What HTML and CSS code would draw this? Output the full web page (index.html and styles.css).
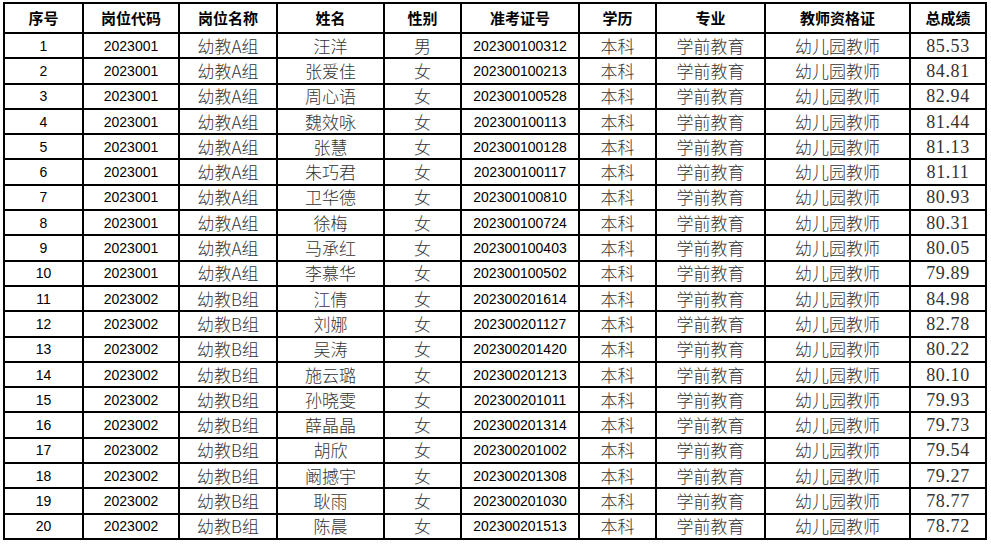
FILE: index.html
```html
<!DOCTYPE html>
<html lang="zh-CN">
<head>
<meta charset="utf-8">
<title>成绩表</title>
<link rel="stylesheet" href="styles.css">
</head>
<body>
<div class="page">
<table class="grid">
<colgroup>
<col class="c1"><col class="c2"><col class="c3"><col class="c4"><col class="c5"><col class="c6"><col class="c7"><col class="c8"><col class="c9"><col class="c10">
</colgroup>
<thead>
<tr class="head"><th>序号</th><th>岗位代码</th><th>岗位名称</th><th>姓名</th><th>性别</th><th>准考证号</th><th>学历</th><th>专业</th><th>教师资格证</th><th>总成绩</th></tr>
</thead>
<tbody>
<tr><td class="n">1</td><td class="n">2023001</td><td class="s">幼教A组</td><td class="s">汪洋</td><td class="s">男</td><td class="n">202300100312</td><td class="s">本科</td><td class="s">学前教育</td><td class="s">幼儿园教师</td><td class="m">85.53</td></tr>
<tr><td class="n">2</td><td class="n">2023001</td><td class="s">幼教A组</td><td class="s">张爱佳</td><td class="s">女</td><td class="n">202300100213</td><td class="s">本科</td><td class="s">学前教育</td><td class="s">幼儿园教师</td><td class="m">84.81</td></tr>
<tr><td class="n">3</td><td class="n">2023001</td><td class="s">幼教A组</td><td class="s">周心语</td><td class="s">女</td><td class="n">202300100528</td><td class="s">本科</td><td class="s">学前教育</td><td class="s">幼儿园教师</td><td class="m">82.94</td></tr>
<tr><td class="n">4</td><td class="n">2023001</td><td class="s">幼教A组</td><td class="s">魏效咏</td><td class="s">女</td><td class="n">202300100113</td><td class="s">本科</td><td class="s">学前教育</td><td class="s">幼儿园教师</td><td class="m">81.44</td></tr>
<tr><td class="n">5</td><td class="n">2023001</td><td class="s">幼教A组</td><td class="s">张慧</td><td class="s">女</td><td class="n">202300100128</td><td class="s">本科</td><td class="s">学前教育</td><td class="s">幼儿园教师</td><td class="m">81.13</td></tr>
<tr><td class="n">6</td><td class="n">2023001</td><td class="s">幼教A组</td><td class="s">朱巧君</td><td class="s">女</td><td class="n">202300100117</td><td class="s">本科</td><td class="s">学前教育</td><td class="s">幼儿园教师</td><td class="m">81.11</td></tr>
<tr><td class="n">7</td><td class="n">2023001</td><td class="s">幼教A组</td><td class="s">卫华德</td><td class="s">女</td><td class="n">202300100810</td><td class="s">本科</td><td class="s">学前教育</td><td class="s">幼儿园教师</td><td class="m">80.93</td></tr>
<tr><td class="n">8</td><td class="n">2023001</td><td class="s">幼教A组</td><td class="s">徐梅</td><td class="s">女</td><td class="n">202300100724</td><td class="s">本科</td><td class="s">学前教育</td><td class="s">幼儿园教师</td><td class="m">80.31</td></tr>
<tr><td class="n">9</td><td class="n">2023001</td><td class="s">幼教A组</td><td class="s">马承红</td><td class="s">女</td><td class="n">202300100403</td><td class="s">本科</td><td class="s">学前教育</td><td class="s">幼儿园教师</td><td class="m">80.05</td></tr>
<tr><td class="n">10</td><td class="n">2023001</td><td class="s">幼教A组</td><td class="s">李慕华</td><td class="s">女</td><td class="n">202300100502</td><td class="s">本科</td><td class="s">学前教育</td><td class="s">幼儿园教师</td><td class="m">79.89</td></tr>
<tr><td class="n">11</td><td class="n">2023002</td><td class="s">幼教B组</td><td class="s">江倩</td><td class="s">女</td><td class="n">202300201614</td><td class="s">本科</td><td class="s">学前教育</td><td class="s">幼儿园教师</td><td class="m">84.98</td></tr>
<tr><td class="n">12</td><td class="n">2023002</td><td class="s">幼教B组</td><td class="s">刘娜</td><td class="s">女</td><td class="n">202300201127</td><td class="s">本科</td><td class="s">学前教育</td><td class="s">幼儿园教师</td><td class="m">82.78</td></tr>
<tr><td class="n">13</td><td class="n">2023002</td><td class="s">幼教B组</td><td class="s">吴涛</td><td class="s">女</td><td class="n">202300201420</td><td class="s">本科</td><td class="s">学前教育</td><td class="s">幼儿园教师</td><td class="m">80.22</td></tr>
<tr><td class="n">14</td><td class="n">2023002</td><td class="s">幼教B组</td><td class="s">施云璐</td><td class="s">女</td><td class="n">202300201213</td><td class="s">本科</td><td class="s">学前教育</td><td class="s">幼儿园教师</td><td class="m">80.10</td></tr>
<tr><td class="n">15</td><td class="n">2023002</td><td class="s">幼教B组</td><td class="s">孙晓雯</td><td class="s">女</td><td class="n">202300201011</td><td class="s">本科</td><td class="s">学前教育</td><td class="s">幼儿园教师</td><td class="m">79.93</td></tr>
<tr><td class="n">16</td><td class="n">2023002</td><td class="s">幼教B组</td><td class="s">薛晶晶</td><td class="s">女</td><td class="n">202300201314</td><td class="s">本科</td><td class="s">学前教育</td><td class="s">幼儿园教师</td><td class="m">79.73</td></tr>
<tr><td class="n">17</td><td class="n">2023002</td><td class="s">幼教B组</td><td class="s">胡欣</td><td class="s">女</td><td class="n">202300201002</td><td class="s">本科</td><td class="s">学前教育</td><td class="s">幼儿园教师</td><td class="m">79.54</td></tr>
<tr><td class="n">18</td><td class="n">2023002</td><td class="s">幼教B组</td><td class="s">阚撼宇</td><td class="s">女</td><td class="n">202300201308</td><td class="s">本科</td><td class="s">学前教育</td><td class="s">幼儿园教师</td><td class="m">79.27</td></tr>
<tr><td class="n">19</td><td class="n">2023002</td><td class="s">幼教B组</td><td class="s">耿雨</td><td class="s">女</td><td class="n">202300201030</td><td class="s">本科</td><td class="s">学前教育</td><td class="s">幼儿园教师</td><td class="m">78.77</td></tr>
<tr><td class="n">20</td><td class="n">2023002</td><td class="s">幼教B组</td><td class="s">陈晨</td><td class="s">女</td><td class="n">202300201513</td><td class="s">本科</td><td class="s">学前教育</td><td class="s">幼儿园教师</td><td class="m">78.72</td></tr>
</tbody>
</table>
</div>
</body>
</html>
```
FILE: styles.css
```css
html, body {
  margin: 0;
  padding: 0;
  background: #fff;
}
.page {
  padding: 2px 0 0 3px;
}
.grid {
  border-collapse: collapse;
  table-layout: fixed;
  width: 982px;
  font-family: "Liberation Sans", Arial, "Noto Sans CJK SC", sans-serif;
  color: #000;
}
.c1 { width: 79px; }
.c2 { width: 96px; }
.c3 { width: 98px; }
.c4 { width: 107px; }
.c5 { width: 77px; }
.c6 { width: 118px; }
.c7 { width: 77px; }
.c8 { width: 109px; }
.c9 { width: 145px; }
.c10 { width: 76px; }
.grid th,
.grid td {
  border: 2px solid #000;
  padding: 0;
  text-align: center;
  vertical-align: middle;
  white-space: nowrap;
  overflow: hidden;
}
.head th {
  height: 28px;
  font-family: "Noto Sans CJK SC", sans-serif;
  font-weight: 700;
  font-size: 15px;
  line-height: 20px;
}
.grid tbody tr {
  height: 25.3px;
}
.grid td {
  line-height: 20px;
}
.n {
  font-family: "Liberation Sans", Arial, sans-serif;
  font-size: 14px;
  color: #000;
}
.s {
  font-family: "Noto Sans CJK SC", sans-serif;
  font-weight: 300;
  font-size: 17px;
  color: #333;
}
.m {
  font-family: "Liberation Serif", "Times New Roman", serif;
  font-size: 18px;
  letter-spacing: 0.6px;
  color: #333;
}
```
